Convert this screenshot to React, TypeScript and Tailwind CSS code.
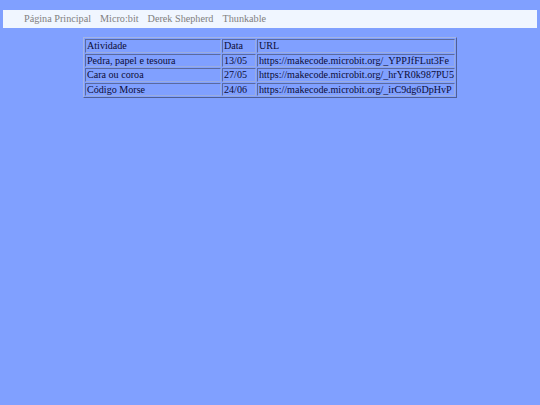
const rows = [
  ["Pedra, papel e tesoura", "13/05", "https://makecode.microbit.org/_YPPJfFLut3Fe"],
  ["Cara ou coroa", "27/05", "https://makecode.microbit.org/_hrYR0k987PU5"],
  ["Código Morse", "24/06", "https://makecode.microbit.org/_irC9dg6DpHvP"],
];

const links = ["Página Principal", "Micro:bit", "Derek Shepherd", "Thunkable"];

const cell =
  "border border-t-[#5a6aa0] border-l-[#5a6aa0] border-b-[#9aacdf] border-r-[#9aacdf] pl-px text-left font-normal whitespace-nowrap";

export default function App() {
  return (
    <div className="min-h-[405px] w-full bg-[#80a0ff] pt-[10px] font-['Liberation_Serif',serif]">
      <nav className="mx-[3px] flex h-[18px] items-center bg-[#f0f6ff] pl-[21px] text-[10.2px] text-[#808080]">
        {links.map((l) => (
          <a key={l} className="mr-[9px] leading-none">
            {l}
          </a>
        ))}
      </nav>
      <table className="mx-auto mt-[9px] w-[374px] table-fixed border-separate border-spacing-[1px] border border-t-[#a4b4e4] border-l-[#a4b4e4] border-b-[#4f5f95] border-r-[#4f5f95] text-[10.1px] leading-[11.5px] text-[#0c0c36]">
        <thead>
          <tr>
            <th className={`${cell} w-[136px]`}>Atividade</th>
            <th className={`${cell} w-[34px]`}>Data</th>
            <th className={cell}>URL</th>
          </tr>
        </thead>
        <tbody>
          {rows.map((r) => (
            <tr key={r[0]}>
              {r.map((c) => (
                <td key={c} className={cell}>
                  {c}
                </td>
              ))}
            </tr>
          ))}
        </tbody>
      </table>
    </div>
  );
}
